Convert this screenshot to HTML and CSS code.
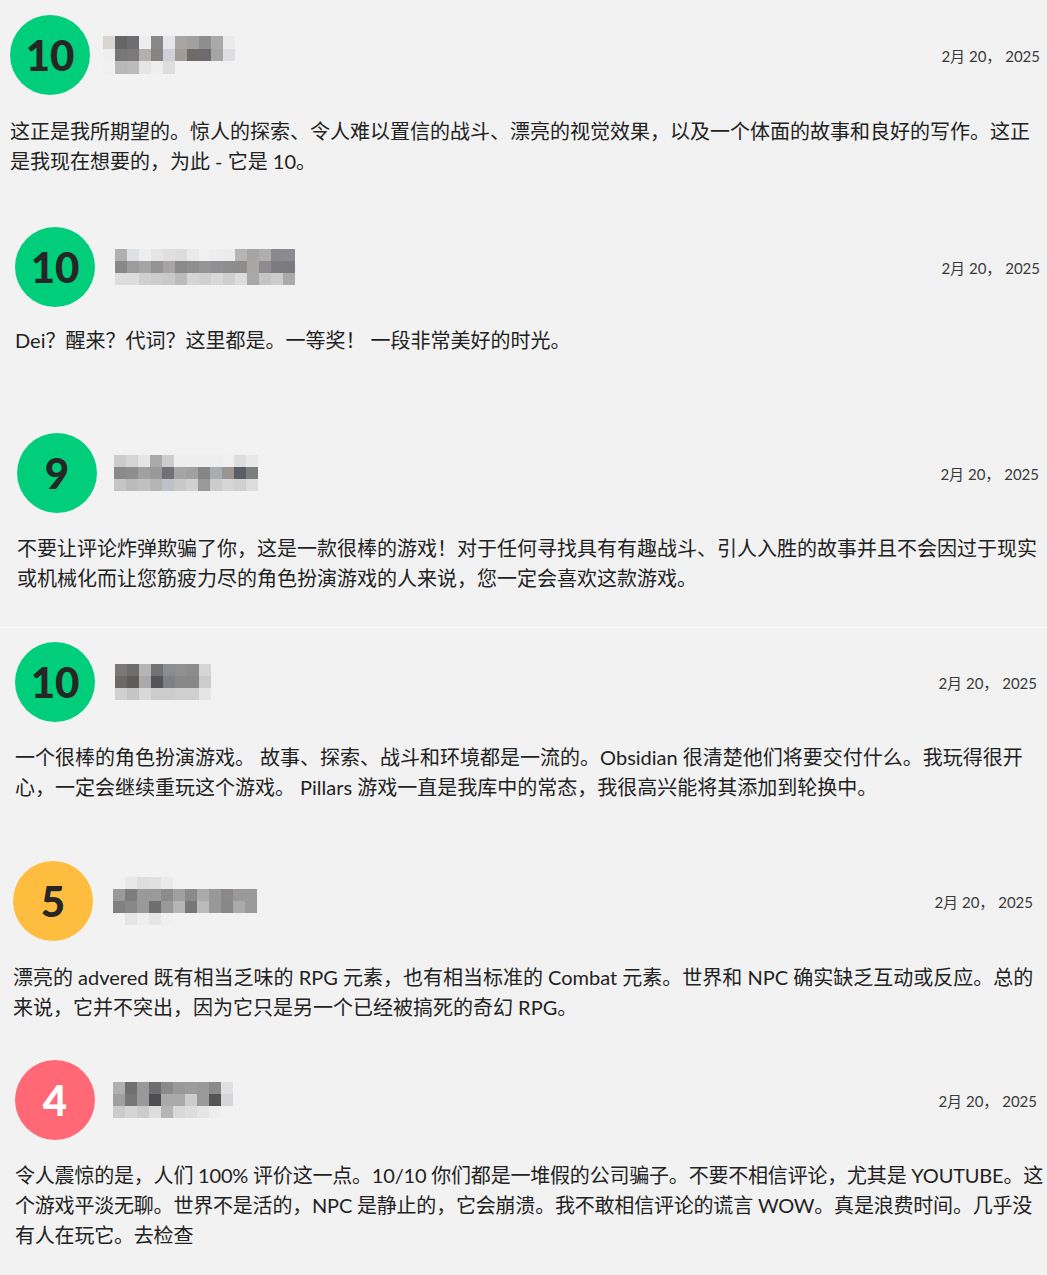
FILE: index.html
```html
<!DOCTYPE html>
<html>
<head lang="zh-CN">
    <meta charset="UTF-8">
    <title>用户评测</title>
    <link rel="stylesheet" href="styles.css">
</head>
<body>
<div id="reviews">

    <div class="review">
        <div class="review-head">
            <div class="score score-good">10</div>
            <svg class="user" width="132" height="38" viewBox="0 0 11 3" preserveAspectRatio="none" shape-rendering="crispEdges">
                <rect x="0" y="0" width="1" height="1" fill="#d8d5d3"/>
                <rect x="1" y="0" width="1" height="1" fill="#666666"/>
                <rect x="2" y="0" width="1" height="1" fill="#6e6e70"/>
                <rect x="3" y="0" width="1" height="1" fill="#eeeeee"/>
                <rect x="4" y="0" width="1" height="1" fill="#888888"/>
                <rect x="5" y="0" width="1" height="1" fill="#e6e6e8"/>
                <rect x="6" y="0" width="1" height="1" fill="#a8a5a3"/>
                <rect x="7" y="0" width="1" height="1" fill="#a0a0a0"/>
                <rect x="8" y="0" width="1" height="1" fill="#8e8e8e"/>
                <rect x="9" y="0" width="1" height="1" fill="#aaaaaa"/>
                <rect x="10" y="0" width="1" height="1" fill="#ebebeb"/>
                <rect x="0" y="1" width="1" height="1" fill="#eeeeee"/>
                <rect x="1" y="1" width="1" height="1" fill="#777777"/>
                <rect x="2" y="1" width="1" height="1" fill="#7a7a7a"/>
                <rect x="3" y="1" width="1" height="1" fill="#b5b0ad"/>
                <rect x="4" y="1" width="1" height="1" fill="#858585"/>
                <rect x="5" y="1" width="1" height="1" fill="#d0d0d8"/>
                <rect x="6" y="1" width="1" height="1" fill="#a09c98"/>
                <rect x="7" y="1" width="1" height="1" fill="#6f6c68"/>
                <rect x="8" y="1" width="1" height="1" fill="#6c6b70"/>
                <rect x="9" y="1" width="1" height="1" fill="#a5a5a3"/>
                <rect x="10" y="1" width="1" height="1" fill="#dedee0"/>
                <rect x="0" y="2" width="1" height="1" fill="#f0f0f0"/>
                <rect x="1" y="2" width="1" height="1" fill="#b8b8b8"/>
                <rect x="2" y="2" width="1" height="1" fill="#bbbbbb"/>
                <rect x="3" y="2" width="1" height="1" fill="#e5e5e5"/>
                <rect x="4" y="2" width="1" height="1" fill="#eeeeee"/>
                <rect x="5" y="2" width="1" height="1" fill="#dddddd"/>
            </svg>
            <span class="date">2月 20， 2025</span>
        </div>
        <p class="review-text">这正是我所期望的。惊人的探索、令人难以置信的战斗、漂亮的视觉效果，以及一个体面的故事和良好的写作。这正是我现在想要的，为此 - 它是 10。</p>
    </div>

    <div class="review">
        <div class="review-head">
            <div class="score score-good">10</div>
            <svg class="user" width="180" height="36" viewBox="0 0 15 3" preserveAspectRatio="none" shape-rendering="crispEdges">
                <rect x="0" y="0" width="1" height="1" fill="#b0b0b0"/>
                <rect x="1" y="0" width="1" height="1" fill="#dde0e5"/>
                <rect x="2" y="0" width="1" height="1" fill="#eeeeee"/>
                <rect x="3" y="0" width="1" height="1" fill="#e5e5e8"/>
                <rect x="4" y="0" width="1" height="1" fill="#e0e0e0"/>
                <rect x="5" y="0" width="1" height="1" fill="#dcdcdc"/>
                <rect x="6" y="0" width="1" height="1" fill="#eaeaea"/>
                <rect x="7" y="0" width="1" height="1" fill="#f0f0f0"/>
                <rect x="8" y="0" width="1" height="1" fill="#eeeeee"/>
                <rect x="9" y="0" width="1" height="1" fill="#ececec"/>
                <rect x="10" y="0" width="1" height="1" fill="#b5b5b5"/>
                <rect x="11" y="0" width="1" height="1" fill="#a8a6a5"/>
                <rect x="12" y="0" width="1" height="1" fill="#b0aeac"/>
                <rect x="13" y="0" width="1" height="1" fill="#8a8a8e"/>
                <rect x="14" y="0" width="1" height="1" fill="#8a8a90"/>
                <rect x="0" y="1" width="1" height="1" fill="#888888"/>
                <rect x="1" y="1" width="1" height="1" fill="#9c9c9c"/>
                <rect x="2" y="1" width="1" height="1" fill="#a5a5a5"/>
                <rect x="3" y="1" width="1" height="1" fill="#949494"/>
                <rect x="4" y="1" width="1" height="1" fill="#a7a5a3"/>
                <rect x="5" y="1" width="1" height="1" fill="#8a8a8a"/>
                <rect x="6" y="1" width="1" height="1" fill="#8f8f90"/>
                <rect x="7" y="1" width="1" height="1" fill="#959598"/>
                <rect x="8" y="1" width="1" height="1" fill="#8f8f95"/>
                <rect x="9" y="1" width="1" height="1" fill="#8d8d8d"/>
                <rect x="10" y="1" width="1" height="1" fill="#8c8c8c"/>
                <rect x="11" y="1" width="1" height="1" fill="#aaa6a3"/>
                <rect x="12" y="1" width="1" height="1" fill="#8c8c90"/>
                <rect x="13" y="1" width="1" height="1" fill="#7c7c80"/>
                <rect x="14" y="1" width="1" height="1" fill="#7a7a7f"/>
                <rect x="0" y="2" width="1" height="1" fill="#dddddd"/>
                <rect x="1" y="2" width="1" height="1" fill="#dddddd"/>
                <rect x="2" y="2" width="1" height="1" fill="#d0d0d0"/>
                <rect x="3" y="2" width="1" height="1" fill="#cccccc"/>
                <rect x="4" y="2" width="1" height="1" fill="#c8c8c8"/>
                <rect x="5" y="2" width="1" height="1" fill="#bbbbbb"/>
                <rect x="6" y="2" width="1" height="1" fill="#d5d5d5"/>
                <rect x="7" y="2" width="1" height="1" fill="#d0d0d0"/>
                <rect x="8" y="2" width="1" height="1" fill="#d8d8d8"/>
                <rect x="9" y="2" width="1" height="1" fill="#cfcfcf"/>
                <rect x="10" y="2" width="1" height="1" fill="#dcdcdc"/>
                <rect x="11" y="2" width="1" height="1" fill="#a8a8a8"/>
                <rect x="12" y="2" width="1" height="1" fill="#c5c5c5"/>
                <rect x="13" y="2" width="1" height="1" fill="#cccccc"/>
                <rect x="14" y="2" width="1" height="1" fill="#aaaaaa"/>
            </svg>
            <span class="date">2月 20， 2025</span>
        </div>
        <p class="review-text">Dei？醒来？代词？这里都是。一等奖！ 一段非常美好的时光。</p>
    </div>

    <div class="review">
        <div class="review-head">
            <div class="score score-good">9</div>
            <svg class="user" width="144" height="36" viewBox="0 0 12 3" preserveAspectRatio="none" shape-rendering="crispEdges">
                <rect x="0" y="0" width="1" height="1" fill="#cccccc"/>
                <rect x="1" y="0" width="1" height="1" fill="#d5d5d5"/>
                <rect x="2" y="0" width="1" height="1" fill="#e5e5e8"/>
                <rect x="3" y="0" width="1" height="1" fill="#aaaaaa"/>
                <rect x="4" y="0" width="1" height="1" fill="#cccccc"/>
                <rect x="5" y="0" width="1" height="1" fill="#eeeeee"/>
                <rect x="6" y="0" width="1" height="1" fill="#eeeeee"/>
                <rect x="7" y="0" width="1" height="1" fill="#eeeeee"/>
                <rect x="8" y="0" width="1" height="1" fill="#eeeeee"/>
                <rect x="9" y="0" width="1" height="1" fill="#f0f0f0"/>
                <rect x="10" y="0" width="1" height="1" fill="#dddddd"/>
                <rect x="11" y="0" width="1" height="1" fill="#e8e8e8"/>
                <rect x="0" y="1" width="1" height="1" fill="#8a8a8a"/>
                <rect x="1" y="1" width="1" height="1" fill="#8e8e8e"/>
                <rect x="2" y="1" width="1" height="1" fill="#a0a0a0"/>
                <rect x="3" y="1" width="1" height="1" fill="#999999"/>
                <rect x="4" y="1" width="1" height="1" fill="#707075"/>
                <rect x="5" y="1" width="1" height="1" fill="#a5a5a5"/>
                <rect x="6" y="1" width="1" height="1" fill="#a0a0a0"/>
                <rect x="7" y="1" width="1" height="1" fill="#858585"/>
                <rect x="8" y="1" width="1" height="1" fill="#a8adb2"/>
                <rect x="9" y="1" width="1" height="1" fill="#9a9590"/>
                <rect x="10" y="1" width="1" height="1" fill="#5a5f63"/>
                <rect x="11" y="1" width="1" height="1" fill="#7c7c7c"/>
                <rect x="0" y="2" width="1" height="1" fill="#c5c5c5"/>
                <rect x="1" y="2" width="1" height="1" fill="#bbbbbb"/>
                <rect x="2" y="2" width="1" height="1" fill="#c0c0c0"/>
                <rect x="3" y="2" width="1" height="1" fill="#b5b5b5"/>
                <rect x="4" y="2" width="1" height="1" fill="#c0c0c8"/>
                <rect x="5" y="2" width="1" height="1" fill="#c8c8c8"/>
                <rect x="6" y="2" width="1" height="1" fill="#d0d0d0"/>
                <rect x="7" y="2" width="1" height="1" fill="#999999"/>
                <rect x="8" y="2" width="1" height="1" fill="#cccccc"/>
                <rect x="9" y="2" width="1" height="1" fill="#d5d5d5"/>
                <rect x="10" y="2" width="1" height="1" fill="#d0d0d0"/>
                <rect x="11" y="2" width="1" height="1" fill="#dddddd"/>
            </svg>
            <span class="date">2月 20， 2025</span>
        </div>
        <p class="review-text">不要让评论炸弹欺骗了你，这是一款很棒的游戏！对于任何寻找具有有趣战斗、引人入胜的故事并且不会因过于现实或机械化而让您筋疲力尽的角色扮演游戏的人来说，您一定会喜欢这款游戏。</p>
    </div>

    <div class="review">
        <div class="review-head">
            <div class="score score-good">10</div>
            <svg class="user" width="96" height="36" viewBox="0 0 8 3" preserveAspectRatio="none" shape-rendering="crispEdges">
                <rect x="0" y="0" width="1" height="1" fill="#7a7877"/>
                <rect x="1" y="0" width="1" height="1" fill="#6e6c6b"/>
                <rect x="2" y="0" width="1" height="1" fill="#b5b5b5"/>
                <rect x="3" y="0" width="1" height="1" fill="#727272"/>
                <rect x="4" y="0" width="1" height="1" fill="#8a8d90"/>
                <rect x="5" y="0" width="1" height="1" fill="#909090"/>
                <rect x="6" y="0" width="1" height="1" fill="#8e8c8a"/>
                <rect x="7" y="0" width="1" height="1" fill="#d5d5d8"/>
                <rect x="0" y="1" width="1" height="1" fill="#6c6a68"/>
                <rect x="1" y="1" width="1" height="1" fill="#5e5c5b"/>
                <rect x="2" y="1" width="1" height="1" fill="#aaaaaa"/>
                <rect x="3" y="1" width="1" height="1" fill="#555558"/>
                <rect x="4" y="1" width="1" height="1" fill="#7d8085"/>
                <rect x="5" y="1" width="1" height="1" fill="#888888"/>
                <rect x="6" y="1" width="1" height="1" fill="#888888"/>
                <rect x="7" y="1" width="1" height="1" fill="#cccccc"/>
                <rect x="0" y="2" width="1" height="1" fill="#d0d0d0"/>
                <rect x="1" y="2" width="1" height="1" fill="#c5c5c5"/>
                <rect x="2" y="2" width="1" height="1" fill="#d8d8d8"/>
                <rect x="3" y="2" width="1" height="1" fill="#cccccc"/>
                <rect x="4" y="2" width="1" height="1" fill="#cccccc"/>
                <rect x="5" y="2" width="1" height="1" fill="#d0d0d0"/>
                <rect x="6" y="2" width="1" height="1" fill="#d0d0d0"/>
                <rect x="7" y="2" width="1" height="1" fill="#e5e5e5"/>
            </svg>
            <span class="date">2月 20， 2025</span>
        </div>
        <p class="review-text">一个很棒的角色扮演游戏。 故事、探索、战斗和环境都是一流的。Obsidian 很清楚他们将要交付什么。我玩得很开心，一定会继续重玩这个游戏。 Pillars 游戏一直是我库中的常态，我很高兴能将其添加到轮换中。</p>
    </div>

    <div class="review">
        <div class="review-head">
            <div class="score score-mixed">5</div>
            <svg class="user" width="144" height="48" viewBox="0 0 12 4" preserveAspectRatio="none" shape-rendering="crispEdges">
                <rect x="1" y="0" width="1" height="1" fill="#e8e8e8"/>
                <rect x="2" y="0" width="1" height="1" fill="#dddddd"/>
                <rect x="3" y="0" width="1" height="1" fill="#e0e0e0"/>
                <rect x="4" y="0" width="1" height="1" fill="#eaeaea"/>
                <rect x="0" y="1" width="1" height="1" fill="#999999"/>
                <rect x="1" y="1" width="1" height="1" fill="#7c7c7c"/>
                <rect x="2" y="1" width="1" height="1" fill="#999999"/>
                <rect x="3" y="1" width="1" height="1" fill="#9a9a9a"/>
                <rect x="4" y="1" width="1" height="1" fill="#8c8c8c"/>
                <rect x="5" y="1" width="1" height="1" fill="#a0a0a0"/>
                <rect x="6" y="1" width="1" height="1" fill="#8a8a8a"/>
                <rect x="7" y="1" width="1" height="1" fill="#aaaaaa"/>
                <rect x="8" y="1" width="1" height="1" fill="#999999"/>
                <rect x="9" y="1" width="1" height="1" fill="#8c8888"/>
                <rect x="10" y="1" width="1" height="1" fill="#999999"/>
                <rect x="11" y="1" width="1" height="1" fill="#9a9a9a"/>
                <rect x="0" y="2" width="1" height="1" fill="#808080"/>
                <rect x="1" y="2" width="1" height="1" fill="#888888"/>
                <rect x="2" y="2" width="1" height="1" fill="#999999"/>
                <rect x="3" y="2" width="1" height="1" fill="#6e6e6e"/>
                <rect x="4" y="2" width="1" height="1" fill="#999999"/>
                <rect x="5" y="2" width="1" height="1" fill="#b5b5b5"/>
                <rect x="6" y="2" width="1" height="1" fill="#777777"/>
                <rect x="7" y="2" width="1" height="1" fill="#bbbbbb"/>
                <rect x="8" y="2" width="1" height="1" fill="#999999"/>
                <rect x="9" y="2" width="1" height="1" fill="#888888"/>
                <rect x="10" y="2" width="1" height="1" fill="#aaaaaa"/>
                <rect x="11" y="2" width="1" height="1" fill="#999999"/>
                <rect x="1" y="3" width="1" height="1" fill="#e5e5e5"/>
                <rect x="2" y="3" width="1" height="1" fill="#eeeeee"/>
                <rect x="3" y="3" width="1" height="1" fill="#e5e5e5"/>
                <rect x="4" y="3" width="1" height="1" fill="#f0f0f0"/>
            </svg>
            <span class="date">2月 20， 2025</span>
        </div>
        <p class="review-text">漂亮的 advered 既有相当乏味的 RPG 元素，也有相当标准的 Combat 元素。世界和 NPC 确实缺乏互动或反应。总的来说，它并不突出，因为它只是另一个已经被搞死的奇幻 RPG。</p>
    </div>

    <div class="review">
        <div class="review-head">
            <div class="score score-bad">4</div>
            <svg class="user" width="120" height="36" viewBox="0 0 10 3" preserveAspectRatio="none" shape-rendering="crispEdges">
                <rect x="0" y="0" width="1" height="1" fill="#b0b0b0"/>
                <rect x="1" y="0" width="1" height="1" fill="#707070"/>
                <rect x="2" y="0" width="1" height="1" fill="#999999"/>
                <rect x="3" y="0" width="1" height="1" fill="#6e6e70"/>
                <rect x="4" y="0" width="1" height="1" fill="#8a8a8a"/>
                <rect x="5" y="0" width="1" height="1" fill="#999999"/>
                <rect x="6" y="0" width="1" height="1" fill="#9c9c9c"/>
                <rect x="7" y="0" width="1" height="1" fill="#999999"/>
                <rect x="8" y="0" width="1" height="1" fill="#8a8a8a"/>
                <rect x="9" y="0" width="1" height="1" fill="#e0e0e5"/>
                <rect x="0" y="1" width="1" height="1" fill="#a0a0a0"/>
                <rect x="1" y="1" width="1" height="1" fill="#777777"/>
                <rect x="2" y="1" width="1" height="1" fill="#999999"/>
                <rect x="3" y="1" width="1" height="1" fill="#4e4e50"/>
                <rect x="4" y="1" width="1" height="1" fill="#aaaaaa"/>
                <rect x="5" y="1" width="1" height="1" fill="#aaaaaa"/>
                <rect x="6" y="1" width="1" height="1" fill="#cccccc"/>
                <rect x="7" y="1" width="1" height="1" fill="#999999"/>
                <rect x="8" y="1" width="1" height="1" fill="#555555"/>
                <rect x="9" y="1" width="1" height="1" fill="#d5d5d8"/>
                <rect x="0" y="2" width="1" height="1" fill="#cccccc"/>
                <rect x="1" y="2" width="1" height="1" fill="#d5d5d5"/>
                <rect x="2" y="2" width="1" height="1" fill="#cccccc"/>
                <rect x="3" y="2" width="1" height="1" fill="#dddddd"/>
                <rect x="4" y="2" width="1" height="1" fill="#b5b5b5"/>
                <rect x="5" y="2" width="1" height="1" fill="#d8d8d8"/>
                <rect x="6" y="2" width="1" height="1" fill="#dddddd"/>
                <rect x="7" y="2" width="1" height="1" fill="#e5e5e5"/>
                <rect x="8" y="2" width="1" height="1" fill="#eeeeee"/>
            </svg>
            <span class="date">2月 20， 2025</span>
        </div>
        <p class="review-text">令人震惊的是，人们 100% 评价这一点。10/10 你们都是一堆假的公司骗子。不要不相信评论，尤其是 YOUTUBE。这个游戏平淡无聊。世界不是活的，NPC 是静止的，它会崩溃。我不敢相信评论的谎言 WOW。真是浪费时间。几乎没有人在玩它。去检查</p>
    </div>

</div>
</body>
</html>
```

FILE: styles.css
```css
* {
    padding: 0;
    margin: 0;
    box-sizing: border-box;
}

body {
    background: #f2f2f2;
    color: #222222;
    font-family: Lato, "Noto Sans CJK SC", sans-serif;
}

#reviews {
    padding-top: 15px;
}

.review {
    padding: 0 10px 0 15px;
    margin-bottom: 50px;
}

/* header row: score circle, user name, date */
.review-head {
    display: flex;
    align-items: center;
    height: 80px;
}

.score {
    flex-shrink: 0;
    width: 80px;
    height: 80px;
    border-radius: 50%;
    display: flex;
    align-items: center;
    justify-content: center;
    font-family: Lato, sans-serif;
    font-weight: 900;
    font-size: 42px;
    line-height: 1;
    color: #262626;
}

.score-good {
    background: #00ce7a;
}

.score-mixed {
    background: #ffbd3f;
}

.score-bad {
    background: #ff6874;
    color: #ffffff;
}

.user {
    display: block;
    margin-left: 20px;
}

.date {
    margin-left: auto;
    font-size: 15px;
    color: #3a3a3a;
}

.review-text {
    margin-top: 20px;
    font-size: 20px;
    line-height: 30px;
}

/* each card sits a little differently in the list */
.review:nth-child(1) {
    padding: 0 7px 0 10px;
    margin-bottom: 51px;
}

.review:nth-child(1) .user {
    margin-left: 13px;
}

.review:nth-child(1) .review-text {
    margin-top: 21px;
}

.review:nth-child(2) {
    padding: 0 7px 0 15px;
    margin-bottom: 78px;
}

.review:nth-child(2) .review-text {
    margin-top: 18px;
}

.review:nth-child(3) {
    padding: 0 8px 0 17px;
    margin-bottom: 34px;
}

.review:nth-child(3) .user {
    margin-left: 17px;
}

.review:nth-child(4) {
    border-top: 1px solid #ffffff;
    padding-top: 14px;
    margin-bottom: 59px;
}

.review:nth-child(5) {
    padding: 0 14px 0 13px;
    margin-bottom: 38px;
}

.review:nth-child(5) .review-text {
    margin-top: 21px;
    margin-right: -10px;
}

.review:nth-child(6) .user {
    margin-left: 18px;
}

.review:nth-child(6) .review-text {
    margin-right: -8px;
    letter-spacing: -0.2px;
}
```
